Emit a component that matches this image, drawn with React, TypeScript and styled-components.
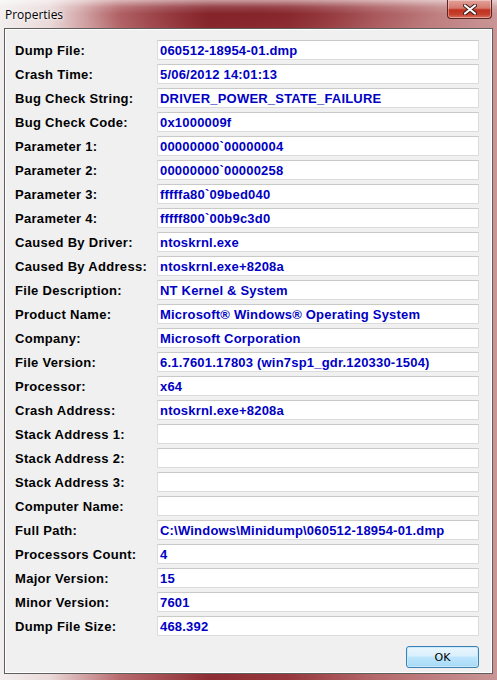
import React from 'react';
import styled, { createGlobalStyle } from 'styled-components';

const Global = createGlobalStyle`
  html, body { margin: 0; padding: 0; background: #c9a3a3; }
`

const Window = styled.div`
  width: 497px;
  height: 680px;
  display: flex;
  flex-direction: column;
  background:
    radial-gradient(ellipse 180px 40px at 260px 10px, rgba(120,20,28,0.55), rgba(120,20,28,0) 100%),
    linear-gradient(90deg, #f3efef 0%, #ead9d9 10%, #b86b6e 24%, #8d2d33 42%, #96383d 58%, #b56a6c 76%, #c99596 100%);
  font-family: "Liberation Sans", Arial, sans-serif;
  overflow: hidden;
`
const TitleBar = styled.div`
  height: 28px;
  display: flex;
  align-items: flex-start;
  justify-content: space-between;
  background: linear-gradient(180deg, rgba(255,255,255,0.55) 0%, rgba(255,255,255,0.15) 25%, rgba(255,255,255,0) 50%);
`
const Title = styled.span`
  font-family: "Open Sans", "Noto Sans", sans-serif;
  font-size: 12px;
  color: #000;
  margin: 6px 0 0 5px;
  text-shadow: 0 0 6px rgba(255,255,255,0.9), 0 0 3px rgba(255,255,255,0.9);
`
const CloseBtn = styled.div`
  width: 45px;
  height: 19px;
  margin-right: 5px;
  box-sizing: border-box;
  border: 1px solid #5b2420;
  border-top: none;
  border-radius: 0 0 4px 4px;
  background: linear-gradient(180deg, #e2a39b 0%, #d57a6e 45%, #c0321f 55%, #c5402c 80%, #d9725f 100%);
  box-shadow: inset 0 0 0 1px rgba(255,255,255,0.35);
  display: flex;
  align-items: center;
  justify-content: center;
`
const Client = styled.div`
  flex: 1;
  margin: 0 4px 6px 4px;
  background: #f0f0f0;
  border: 1px solid #5f5f5f;
  box-shadow: inset 0 0 0 1px #ffffff;
  display: flex;
  flex-direction: column;
  padding: 11px 0 0 10px;
`
const Rows = styled.div`
  display: flex;
  flex-direction: column;
  gap: 4px;
`
const Row = styled.div`
  display: flex;
  align-items: center;
  height: 20px;
`
const Label = styled.span`
  width: 142px;
  font-size: 13px;
  font-weight: bold;
  color: #000;
  letter-spacing: 0.3px;
`
const Value = styled.div`
  width: 322px;
  height: 20px;
  box-sizing: border-box;
  background: #fff;
  border: 1px solid #dcdcdc;
  border-top-color: #c9c9c9;
  padding: 0 0 0 2px;
  display: flex;
  align-items: center;
  font-size: 13px;
  font-weight: bold;
  color: #0000c4;
  letter-spacing: 0.2px;
  white-space: nowrap;
  overflow: hidden;
`
const Footer = styled.div`
  display: flex;
  justify-content: flex-end;
  width: 464px;
  margin-top: 10px;
`
const OkButton = styled.button`
  width: 73px;
  height: 22px;
  box-sizing: border-box;
  border: 1px solid #3c7fb1;
  border-radius: 3px;
  background: linear-gradient(180deg, #eaf6fd 0%, #d9f0fc 45%, #bee6fd 50%, #a7d9f5 100%);
  box-shadow: inset 0 0 0 1px #c8eafc;
  font-family: "DejaVu Sans", sans-serif;
  font-size: 11px;
  color: #000;
  padding: 0;
`

const fields: [string, string][] = [
  ['Dump File:', '060512-18954-01.dmp'],
  ['Crash Time:', '5/06/2012 14:01:13'],
  ['Bug Check String:', 'DRIVER_POWER_STATE_FAILURE'],
  ['Bug Check Code:', '0x1000009f'],
  ['Parameter 1:', '00000000`00000004'],
  ['Parameter 2:', '00000000`00000258'],
  ['Parameter 3:', 'fffffa80`09bed040'],
  ['Parameter 4:', 'fffff800`00b9c3d0'],
  ['Caused By Driver:', 'ntoskrnl.exe'],
  ['Caused By Address:', 'ntoskrnl.exe+8208a'],
  ['File Description:', 'NT Kernel & System'],
  ['Product Name:', 'Microsoft® Windows® Operating System'],
  ['Company:', 'Microsoft Corporation'],
  ['File Version:', '6.1.7601.17803 (win7sp1_gdr.120330-1504)'],
  ['Processor:', 'x64'],
  ['Crash Address:', 'ntoskrnl.exe+8208a'],
  ['Stack Address 1:', ''],
  ['Stack Address 2:', ''],
  ['Stack Address 3:', ''],
  ['Computer Name:', ''],
  ['Full Path:', 'C:\\Windows\\Minidump\\060512-18954-01.dmp'],
  ['Processors Count:', '4'],
  ['Major Version:', '15'],
  ['Minor Version:', '7601'],
  ['Dump File Size:', '468.392'],
]

function App() {
  return (
    <>
      <Global />
      <Window>
        <TitleBar>
          <Title>Properties</Title>
          <CloseBtn>
            <svg width="14" height="11" viewBox="0 0 14 11">
              <path d="M2 1.5 L12 9.5 M12 1.5 L2 9.5" stroke="#3a1a1a" strokeWidth="4" strokeLinecap="round" />
              <path d="M2 1.5 L12 9.5 M12 1.5 L2 9.5" stroke="#ffffff" strokeWidth="2.2" strokeLinecap="round" />
            </svg>
          </CloseBtn>
        </TitleBar>
        <Client>
          <Rows>
            {fields.map(([label, value]) => (
              <Row key={label}>
                <Label>{label}</Label>
                <Value>{value}</Value>
              </Row>
            ))}
          </Rows>
          <Footer>
            <OkButton>OK</OkButton>
          </Footer>
        </Client>
      </Window>
    </>
  );
}

export default App;
